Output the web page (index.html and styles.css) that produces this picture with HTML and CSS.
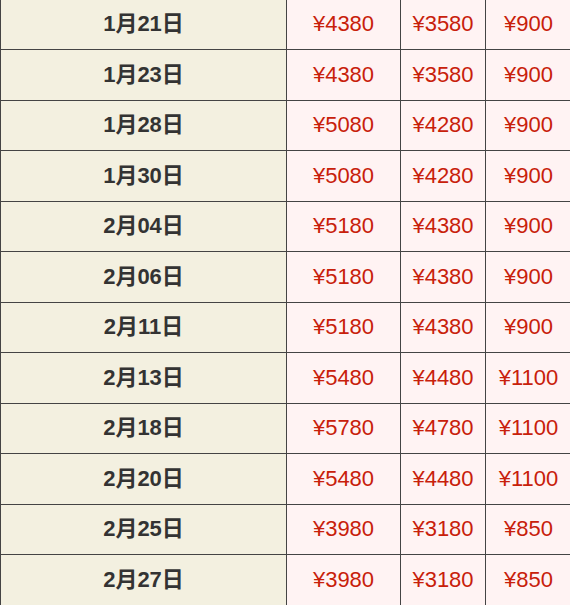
FILE: index.html
```html
<!DOCTYPE html>
<html lang="ja">
<head>
<meta charset="utf-8">
<title>料金表</title>
<link rel="stylesheet" href="styles.css">
</head>
<body>
<table class="price-table">
  <colgroup>
    <col class="c-date">
    <col class="c-a">
    <col class="c-b">
    <col class="c-c">
  </colgroup>
  <tbody>
    <tr><th>1月21日</th><td>¥4380</td><td>¥3580</td><td>¥900</td></tr>
    <tr><th>1月23日</th><td>¥4380</td><td>¥3580</td><td>¥900</td></tr>
    <tr><th>1月28日</th><td>¥5080</td><td>¥4280</td><td>¥900</td></tr>
    <tr><th>1月30日</th><td>¥5080</td><td>¥4280</td><td>¥900</td></tr>
    <tr><th>2月04日</th><td>¥5180</td><td>¥4380</td><td>¥900</td></tr>
    <tr><th>2月06日</th><td>¥5180</td><td>¥4380</td><td>¥900</td></tr>
    <tr><th>2月11日</th><td>¥5180</td><td>¥4380</td><td>¥900</td></tr>
    <tr><th>2月13日</th><td>¥5480</td><td>¥4480</td><td>¥1100</td></tr>
    <tr><th>2月18日</th><td>¥5780</td><td>¥4780</td><td>¥1100</td></tr>
    <tr><th>2月20日</th><td>¥5480</td><td>¥4480</td><td>¥1100</td></tr>
    <tr><th>2月25日</th><td>¥3980</td><td>¥3180</td><td>¥850</td></tr>
    <tr><th>2月27日</th><td>¥3980</td><td>¥3180</td><td>¥850</td></tr>
  </tbody>
</table>
</body>
</html>
```

FILE: styles.css
```css
html, body {
  margin: 0;
  padding: 0;
  overflow: hidden;
  background: #ffffff;
}

.price-table {
  border-collapse: collapse;
  table-layout: fixed;
  width: 571px;
  margin-top: -1.5px;
  font-family: "Liberation Sans", "Noto Sans CJK JP", sans-serif;
  font-size: 22px;
  line-height: 24px;
}

.c-date { width: 286px; }
.c-a { width: 114px; }
.c-b { width: 85px; }
.c-c { width: 86px; }

.price-table th,
.price-table td {
  border: 1px solid #444444;
  height: 50.5px;
  padding: 0;
  text-align: center;
  vertical-align: middle;
  box-sizing: border-box;
}

.price-table th {
  background: #f3f0e0;
  color: #333333;
  font-weight: bold;
}

.price-table td {
  background: #fff3f3;
  color: #c8200a;
  font-weight: normal;
}
```
